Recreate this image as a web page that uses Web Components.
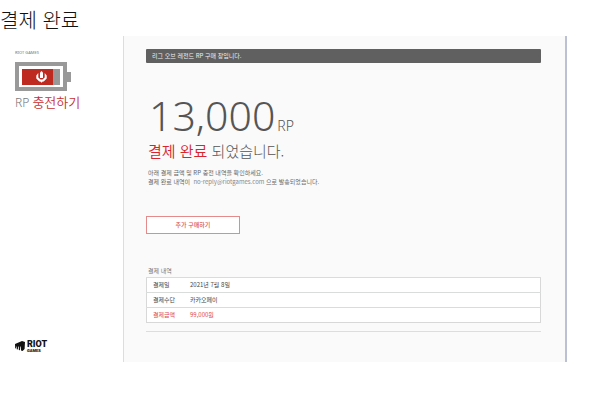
<!DOCTYPE html>
<html lang="ko">
<head>
<meta charset="utf-8">
<title>결제 완료</title>
<style>
html { height: 100%; }
body { margin: 0; min-height: 100%; background: #fff; font-family: "Noto Sans CJK KR", sans-serif; color: #666; }
</style>
</head>
<body>
<rp-page></rp-page>
<script>
const define = (name, html) => {
  const t = document.createElement('template');
  t.innerHTML = html;
  customElements.define(name, class extends HTMLElement {
    constructor() {
      super();
      this.attachShadow({ mode: 'open' }).append(t.content.cloneNode(true));
    }
  });
};

define('rp-battery', `
<style>:host { display: block; } svg { display: block; }</style>
<svg width="57" height="30" viewBox="0 0 57 30" aria-hidden="true">
  <path fill="#999" d="M0 0h52v10h4v10h-4v9H0z"/>
  <path fill="#fff" d="M4 4h44v21H4z"/>
  <path fill="#be2a20" d="M7 7h31v16H7z"/>
  <path fill="#999" d="M38 7h7v16h-7z"/>
  <path fill="#fff" d="M26.500 9l1.500 1.500V16h-3v-5.500z"/>
  <path fill="#fff" d="M21.300 13.500l2-2.500v4.500l2.200 2h2l2.200-2V11l2 2.500v3l-3 3h-1l-1.200 1.200-1.200-1.200h-1l-3-3z"/>
</svg>`);

define('riot-logo', `
<style>
:host { display: flex; align-items: center; gap: 2px; color: #111; }
svg { display: block; }
.words { display: grid; justify-items: start; }
b { font: 900 9px/10px Roboto, sans-serif; }
small { font: 900 4px/4px Roboto, sans-serif; }
</style>
<svg width="10" height="11" viewBox="0 0 10 11" aria-hidden="true">
  <path fill="#111" d="M0 3l7-3 3 1-.4 7-2 2-1.600-.4V5.600h-.6L5 9.200l-1.200-.3V5.600h-.6l-.4 3-1.100-.3V5.400H1.200L1 7.600l-.8-.4z"/>
</svg>
<span class="words"><b>RIOT</b><small>GAMES</small></span>`);

define('rp-sidebar', `
<style>
:host { display: flex; flex-direction: column; justify-content: space-between; align-items: flex-start; padding: 14px 0 9px 15px; }
.brand { font: 500 4px/6px "Noto Sans", sans-serif; color: #888; margin-bottom: 6px; }
h2 { margin: 0; font: 300 12px/20px "Noto Sans", "Noto Sans CJK KR", sans-serif; color: #777; white-space: nowrap; }
em { font-style: normal; font-size: 13px; font-weight: 350; color: #c8302e; }
</style>
<div>
  <div class="brand">RIOT GAMES</div>
  <rp-battery></rp-battery>
  <h2>RP <em>충전하기</em></h2>
</div>
<riot-logo></riot-logo>`);

define('rp-notice', `
<style>
:host { display: block; background: #606060; border-radius: 1px; color: #eee; font-size: 6px; line-height: 14px; padding: 0 6px; }
</style><slot></slot>`);

define('rp-amount', `
<style>
:host { display: block; padding-left: 2px; }
.amount { display: flex; align-items: baseline; gap: 2px; line-height: 28px; font-family: "Noto Sans", sans-serif; font-weight: 300; color: #555; padding-left: 1px; }
.value { font-size: 41px; }
.unit { font-size: 14px; }
h2 { margin: 0; font-size: 15px; line-height: 22px; font-weight: 300; color: #555; }
em { font-style: normal; color: #d8242e; font-weight: 350; }
p { margin: 6px 0 0; font-size: 6px; line-height: 9px; }
a { color: #888; text-decoration: none; }
</style>
<div class="amount"><span class="value">13,000</span><span class="unit">RP</span></div>
<h2><em>결제 완료</em> 되었습니다.</h2>
<p>아래 결제 금액 및 RP 충전 내역을 확인하세요.<br>결제 완료 내역이 &nbsp;<a href="mailto:no-reply@riotgames.com">no-reply@riotgames.com</a> 으로 발송되었습니다.</p>`);

define('rp-button', `
<style>
:host { display: block; }
button { display: block; width: 94px; height: 18px; padding: 0; border: 1px solid #e58a8a; background: #fff; color: #e0504f; font: 500 6px/14px "Noto Sans CJK KR", sans-serif; }
</style><button type="button"><slot></slot></button>`);

define('rp-receipt', `
<style>
:host { display: block; font-size: 6px; border-bottom: 1px solid #ddd; padding-bottom: 8px; }
table { width: 100%; border-collapse: collapse; background: #fff; color: #444; line-height: 14px; }
caption { text-align: left; color: #777; line-height: 8px; padding: 0 2px 2px; background: #fafafa; }
tbody { border: 1px solid #d8d8d8; }
tr { border-top: 1px solid #d8dcda; }
th, td { padding: 0; text-align: left; font-weight: 400; }
th { width: 37px; padding-left: 6px; }
.total { color: #e04848; }
</style>
<table>
  <caption>결제 내역</caption>
  <tbody>
    <tr><th scope="row">결제일</th><td>2021년 7월 8일</td></tr>
    <tr><th scope="row">결제수단</th><td>카카오페이</td></tr>
    <tr class="total"><th scope="row">결제금액</th><td>99,000원</td></tr>
  </tbody>
</table>`);

define('rp-page', `
<style>
:host { display: block; }
h1 { margin: 0; padding: 5px 0 1px; font: 300 20px/30px "Noto Sans CJK KR", sans-serif; color: #111; }
.window { display: grid; grid-template-columns: 123px minmax(0, 1fr); margin-right: 29px; border-right: 2px solid #bcc0d4; }
main { background: #fafafa; border-left: 1px solid #ddd; padding: 13px 24px 30px 22px; }
rp-amount { margin-top: 38px; }
rp-button { margin-top: 30px; }
rp-receipt { margin-top: 33px; }
</style>
<h1>결제 완료</h1>
<div class="window">
  <rp-sidebar></rp-sidebar>
  <main>
    <rp-notice>리그 오브 레전드 RP 구매 창입니다.</rp-notice>
    <rp-amount></rp-amount>
    <rp-button>추가 구매하기</rp-button>
    <rp-receipt></rp-receipt>
  </main>
</div>`);
</script>
</body>
</html>
